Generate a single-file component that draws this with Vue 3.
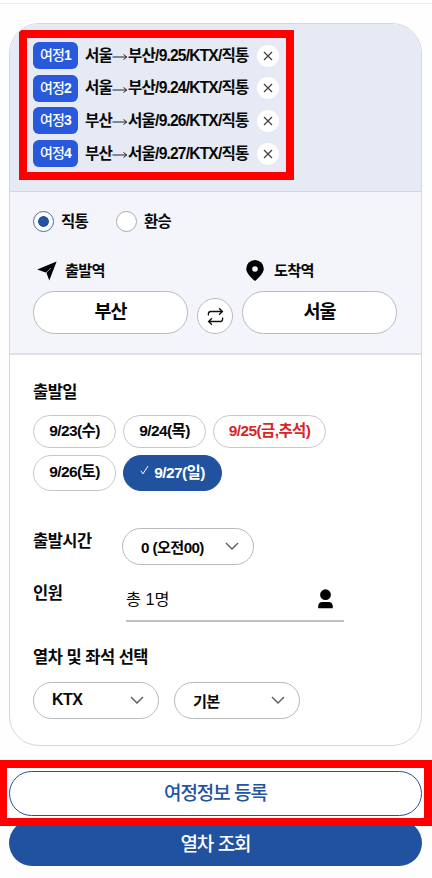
<script setup>
import { ref } from 'vue'

const trips = [
  { from: '서울', to: '부산', info: '/9.25/KTX/직통' },
  { from: '서울', to: '부산', info: '/9.24/KTX/직통' },
  { from: '부산', to: '서울', info: '/9.26/KTX/직통' },
  { from: '부산', to: '서울', info: '/9.27/KTX/직통' },
]
const dates = [
  { num: '9/23', day: '(수)' },
  { num: '9/24', day: '(목)' },
  { num: '9/25', day: '(금,추석)', holiday: true },
  { num: '9/26', day: '(토)' },
  { num: '9/27', day: '(일)' },
]
const picked = ref(4)
const direct = ref(true)
</script>

<template>
  <main class="page">
    <div class="card">
      <section class="trips">
        <ul class="trip-list">
          <li v-for="(t, i) in trips" :key="i" class="trip">
            <span class="badge">여정<b>{{ i + 1 }}</b></span>
            <span class="trip-text">{{ t.from }}<svg class="to" viewBox="0 0 16 8"><path d="M0.5 4H14.5M11.5 1.5L14.8 4L11.5 6.5" /></svg>{{ t.to }}{{ t.info }}</span>
            <button class="remove"><svg viewBox="0 0 10 10"><path d="M1 1L9 9M9 1L1 9" /></svg></button>
          </li>
        </ul>
      </section>

      <section class="route">
        <div class="radios">
          <label class="radio" @click="direct = true"><i :class="['dot', { on: direct }]"></i>직통</label>
          <label class="radio" @click="direct = false"><i :class="['dot', { on: !direct }]"></i>환승</label>
        </div>
        <div class="stations">
          <div class="station">
            <div class="station-label depart">
              <svg class="plane" viewBox="0 0 20 20"><path d="M19.6 .4L12.3 19.6L9.4 11.8L.2 8.4Z" /><path class="fold" d="M9 12L14 6.8" /></svg>
              출발역
            </div>
            <button class="station-name">부산</button>
          </div>
          <button class="swap">
            <svg viewBox="0 0 18 20"><path d="M1.5 9V7.2Q1.5 4.7 4 4.7H16M12.8 1.3L16.3 4.7L12.8 8.1M16.5 11V12.8Q16.5 15.3 14 15.3H2M5.2 11.9L1.7 15.3L5.2 18.7" /></svg>
          </button>
          <div class="station">
            <div class="station-label arrive">
              <svg class="pin" viewBox="0 0 18 21"><path fill-rule="evenodd" d="M9 0A8.8 8.8 0 0 1 17.8 8.8C17.8 13 13 17.8 9 21C5 17.8.2 13 .2 8.8A8.8 8.8 0 0 1 9 0ZM9 6.2A2.8 2.8 0 1 0 9 11.8A2.8 2.8 0 1 0 9 6.2Z" /></svg>
              도착역
            </div>
            <button class="station-name">서울</button>
          </div>
        </div>
      </section>

      <section class="details">
        <h2 class="title">출발일</h2>
        <div class="chips">
          <button
            v-for="(d, i) in dates"
            :key="d.num"
            :class="['chip', { holiday: d.holiday, picked: picked === i }]"
            @click="picked = i"
          >
            <svg v-if="picked === i" class="check" viewBox="0 0 9 10"><path d="M.8 5.8L3 8.8L8 1" /></svg>
            <span>{{ d.num }}{{ d.day }}</span>
          </button>
        </div>

        <div class="row time">
          <h2 class="title">출발시간</h2>
          <button class="select wide"><span>0 (오전00)</span><svg class="chev" viewBox="0 0 14 8"><path d="M1 1L7 7L13 1" /></svg></button>
        </div>
        <div class="row people">
          <h2 class="title">인원</h2>
          <div class="count">
            <span>총 1명</span>
            <svg viewBox="0 0 15 20"><circle cx="7.5" cy="5.7" r="5.4" /><path d="M.2 19.3V17.3Q.4 13 4.5 13H10.5Q14.6 13 14.8 17.3V19.3Z" /></svg>
          </div>
        </div>

        <h2 class="title seat-title">열차 및 좌석 선택</h2>
        <div class="selects">
          <button class="select"><span class="ktx">KTX</span><svg class="chev" viewBox="0 0 14 8"><path d="M1 1L7 7L13 1" /></svg></button>
          <button class="select"><span>기본</span><svg class="chev" viewBox="0 0 14 8"><path d="M1 1L7 7L13 1" /></svg></button>
        </div>
      </section>
    </div>

    <div class="register-frame">
      <button class="register">여정정보 등록</button>
    </div>
    <button class="search">열차 조회</button>
  </main>
</template>

<style>
body {
  background: #fefefe;
}
</style>

<style scoped>
* {
  box-sizing: border-box;
}
.page {
  width: 432px;
  height: 878px;
  padding-top: 3px;
  overflow: hidden;
  font-family: "Liberation Sans", "Noto Sans CJK KR", sans-serif;
  color: #080808;
}
.page::before {
  content: "";
  display: block;
  height: 1px;
  margin-bottom: 19px;
  background: #eeeeef;
}
button {
  font: inherit;
  color: inherit;
  padding: 0;
  margin: 0;
  background: #fff;
  border: 1px solid #b9babc;
  white-space: nowrap;
}
svg {
  display: block;
  flex: none;
  fill: none;
}
.card {
  width: 413px;
  height: 723px;
  margin-left: 9px;
  border: 1px solid #d7d8dc;
  border-radius: 30px;
  overflow: hidden;
  background: #fff;
}
.trips {
  height: 168px;
  padding: 6px 0 0 9px;
  background: #e5eaf4;
  border-bottom: 1px solid #d3d8e4;
}
.trip-list {
  width: 275px;
  height: 150px;
  margin: 0;
  padding: 4px 0 0 6px;
  list-style: none;
  border: 8px solid #fe0000;
}
.trip {
  display: flex;
  align-items: center;
  height: 27px;
  margin-bottom: 5.7px;
}
.badge {
  width: 45px;
  height: 27px;
  line-height: 26px;
  border-radius: 6px;
  background: #2859dc;
  color: #fff;
  font-size: 14px;
  font-weight: 500;
  letter-spacing: -0.8px;
  text-align: center;
}
.trip-text {
  width: 172px;
  padding-left: 7px;
  display: flex;
  align-items: center;
  line-height: 26px;
  font-size: 15.6px;
  font-weight: bold;
  letter-spacing: -0.82px;
  white-space: nowrap;
}
.to {
  width: 16px;
  height: 8px;
  margin-top: 3px;
  stroke: #222;
  stroke-width: 1;
}
.remove {
  display: flex;
  align-items: center;
  justify-content: center;
  width: 22px;
  height: 22px;
  margin-left: 7px;
  border: 0;
  border-radius: 50%;
}
.remove svg {
  width: 10px;
  height: 10px;
  stroke: #444;
  stroke-width: 1.3;
}
.route {
  height: 163px;
  padding: 19px 0 0 23px;
  background: #f3f5fa;
  border-bottom: 2px solid #dfe1e8;
}
.radios {
  display: flex;
  gap: 28px;
  height: 21px;
}
.radio {
  display: flex;
  align-items: center;
  gap: 7px;
  font-size: 15.5px;
  font-weight: 600;
  letter-spacing: -0.8px;
  line-height: 20px;
}
.dot {
  width: 21px;
  height: 21px;
  border: 1px solid #aaa;
  border-radius: 50%;
  background: #fff;
}
.dot.on {
  border-color: #4a6bb0;
  background: radial-gradient(circle, #2354a3 5px, #fff 5.7px);
}
.stations {
  display: flex;
  align-items: flex-end;
  padding-top: 28px;
}
.station {
  width: 155px;
}
.station-label {
  display: flex;
  align-items: center;
  height: 21px;
  font-size: 15.2px;
  font-weight: bold;
  letter-spacing: -0.7px;
  line-height: 18px;
}
.depart {
  padding-left: 4px;
  gap: 8px;
}
.arrive {
  padding-left: 4px;
  gap: 10px;
}
.plane {
  width: 20px;
  height: 20px;
  fill: #000;
}
.fold {
  stroke: #f3f6fb;
  stroke-width: 0.6;
}
.pin {
  width: 18px;
  height: 21px;
  fill: #000;
}
.station-name {
  display: block;
  width: 155px;
  height: 43px;
  margin-top: 10px;
  padding-bottom: 5px;
  border-radius: 22px;
  font-size: 18.5px;
  font-weight: bold;
  letter-spacing: -1px;
}
.swap {
  display: flex;
  align-items: center;
  justify-content: center;
  width: 36px;
  height: 36px;
  margin: 0 9px;
  border-radius: 50%;
}
.swap svg {
  width: 17px;
  height: 19px;
  margin-top: 1px;
  stroke: #111;
  stroke-width: 1.4;
}
.details {
  padding: 25px 0 0 23px;
}
.title {
  margin: 0;
  height: 24px;
  line-height: 24px;
  font-size: 16.5px;
  font-weight: bold;
  letter-spacing: -0.5px;
}
.chips {
  display: flex;
  flex-wrap: wrap;
  align-items: flex-start;
  gap: 7px;
  width: 330px;
  padding-top: 11px;
}
.chip {
  display: flex;
  align-items: center;
  justify-content: center;
  width: 83px;
  height: 33px;
  border-color: #c6c7c9;
  border-radius: 18px;
  font-size: 15.5px;
  font-weight: bold;
  letter-spacing: -0.6px;
  padding-bottom: 5px;
}
.chip.holiday {
  width: 113px;
  color: #d82626;
}
.chip:nth-child(n + 4) {
  height: 36px;
  padding-bottom: 6px;
}
.chip.picked {
  width: 99px;
  gap: 5px;
  padding-bottom: 4px;
  background: #2152a0;
  border-color: #2152a0;
  color: #fff;
}
.check {
  width: 9px;
  height: 10px;
  margin-bottom: 2px;
  stroke: #fff;
  stroke-width: 1;
}
.row {
  display: flex;
}
.time {
  padding-top: 37px;
}
.time .title {
  width: 89px;
  padding-top: 1px;
}
.select {
  display: flex;
  align-items: center;
  justify-content: space-between;
  width: 126px;
  height: 37px;
  padding: 0 14px 1px 18px;
  border-radius: 19px;
  font-size: 15.2px;
  font-weight: bold;
  letter-spacing: -0.6px;
}
.select.wide {
  width: 132px;
}
.ktx {
  font-size: 16px;
}
.chev {
  width: 14px;
  height: 8px;
  stroke: #606266;
  stroke-width: 1.5;
}
.people {
  padding-top: 16px;
}
.people .title {
  width: 93px;
}
.count {
  display: flex;
  justify-content: space-between;
  width: 218px;
  height: 41px;
  padding: 8px 11px 0 0;
  border-bottom: 2px solid #c2c2c3;
  font-size: 16.3px;
  line-height: 21px;
}
.count svg {
  width: 15px;
  height: 20px;
  fill: #000;
}
.seat-title {
  margin-top: 23px;
}
.selects {
  display: flex;
  gap: 15px;
  padding-top: 13px;
}
.register-frame {
  position: relative;
  z-index: 1;
  height: 66px;
  margin-top: 14px;
  padding: 3px 2px 0;
  border: 8px solid #fe0000;
  border-left-width: 7px;
  background: #fff;
}
.register {
  display: block;
  width: 413px;
  height: 45px;
  padding-bottom: 4px;
  border: 1.5px solid #2354a0;
  border-radius: 23px;
  color: #2354a0;
  font-size: 19px;
  font-weight: 500;
  letter-spacing: -1px;
}
.search {
  display: block;
  width: 413px;
  height: 46px;
  margin: -6px 0 0 9px;
  padding-bottom: 2px;
  border: 0;
  border-radius: 23px;
  background: #2152a0;
  color: #fff;
  font-size: 19px;
  font-weight: 500;
  letter-spacing: -1px;
}
</style>
